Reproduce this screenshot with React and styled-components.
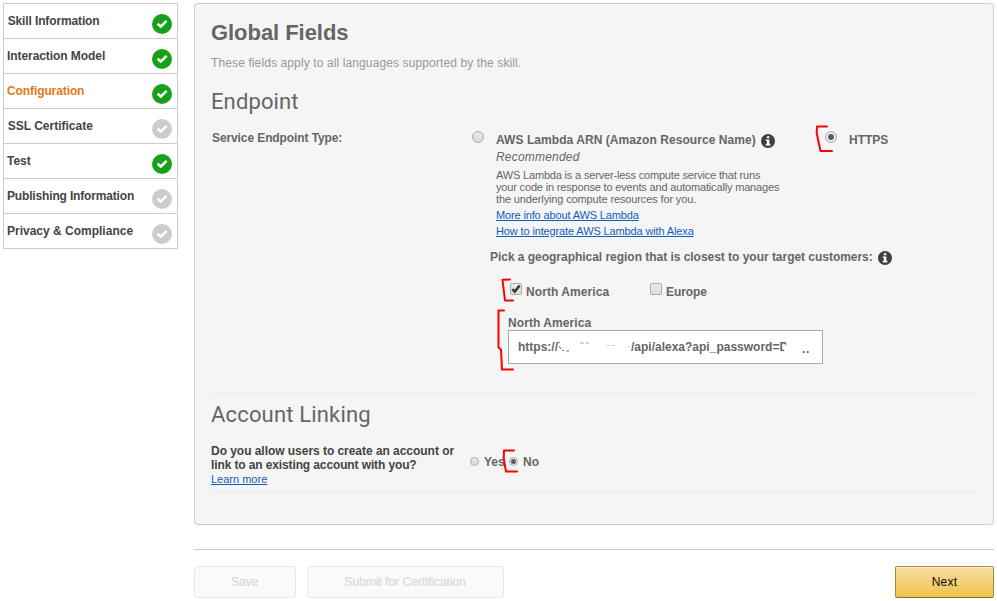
import React from 'react';
import styled, { createGlobalStyle, css } from 'styled-components';

const GlobalStyle = createGlobalStyle`
  *, *::before, *::after { box-sizing: border-box; }
  body { margin: 0; background: #fff; overflow: hidden; }
`;

const Page = styled.div`
  position: relative;
  display: flex;
  align-items: flex-start;
  gap: 16px;
  width: 997px;
  height: 601px;
  padding: 3px 3px 0;
  font: 12px/14px "Liberation Sans", Arial, sans-serif;
  color: #666;
`;

const Nav = styled.nav`
  width: 175px;
  flex: none;
  border: 1px solid #ccc;
`;

const NavItem = styled.a`
  display: flex;
  justify-content: space-between;
  height: 35px;
  padding: 10px 5px 0 3px;
  font-weight: bold;
  letter-spacing: ${(p) => p.$spacing || 0}px;
  text-indent: ${(p) => p.$indent || 0}px;
  color: ${(p) => (p.$active ? '#e47911' : '#444')};
  border-bottom: 1px solid #ccc;
  white-space: nowrap;
  &:last-child { height: 34px; border-bottom: 0; }
`;

const StatusSvg = styled.svg`
  flex: none;
  width: 20px;
  height: 20px;
`;

const Main = styled.main`
  width: 800px;
  flex: none;
`;

const Panel = styled.section`
  height: 522px;
  padding: 15px 16px 0;
  background: #f5f5f5;
  border: 1px solid #ccc;
  border-radius: 4px;
`;

const Title = styled.h1`
  margin: 0;
  font-size: 22px;
  line-height: 28px;
  font-weight: bold;
  letter-spacing: -0.05px;
  color: #666;
`;

const Intro = styled.p`
  margin: 9px 0 0;
  letter-spacing: 0.115px;
  color: #999;
`;

const Heading = styled.h2`
  margin: ${(p) => p.$top}px 0 0;
  font: 400 22px/28px Roboto, sans-serif;
  letter-spacing: ${(p) => p.$spacing}px;
  color: #666;
`;

const EndpointGrid = styled.div`
  display: grid;
  grid-template-columns: 261px 353px 1fr;
  height: 133px;
  padding-top: 15px;
`;

const Label = styled.span`
  font-weight: bold;
  letter-spacing: ${(p) => p.$spacing || 0}px;
  white-space: nowrap;
`;

const FieldLabel = styled(Label)`
  padding-left: 1px;
`;

const Choice = styled.div`
  display: flex;
  align-items: flex-start;
  gap: ${(p) => p.$gap}px;
`;

const Radio = styled.span`
  display: grid;
  place-items: center;
  flex: none;
  width: ${(p) => p.$size}px;
  height: ${(p) => p.$size}px;
  border: 1px solid #aaa;
  border-radius: 50%;
  background: linear-gradient(#e9e9e9, #dcdcdc);
  ${(p) => p.$checked && css`
    background: #eee;
    &::after {
      content: '';
      width: ${p.$size > 10 ? 6 : 5}px;
      height: ${p.$size > 10 ? 6 : 5}px;
      border-radius: 50%;
      background: #5c5c5c;
    }
  `}
`;

const Details = styled.div`
  padding-top: 2px;
`;

const LabelLine = styled.div`
  display: flex;
  gap: ${(p) => p.$gap}px;
  height: 14px;
`;

const InfoSvg = styled.svg`
  width: 14px;
  height: 14px;
  margin-top: 1px;
  flex: none;
`;

const Recommended = styled.div`
  padding: 3px 0 5px 0;
  font-style: italic;
  letter-spacing: 0.2px;
`;

const Small = styled.div`
  font-size: 11px;
  line-height: 12px;
  letter-spacing: ${(p) => p.$spacing}px;
  white-space: nowrap;
`;

const Link = styled.a`
  display: block;
  width: fit-content;
  margin-top: ${(p) => p.$top}px;
  font-size: 11px;
  line-height: 12px;
  letter-spacing: ${(p) => p.$spacing || 0}px;
  color: #0f5fbf;
  text-decoration: underline;
  white-space: nowrap;
`;

const Region = styled.div`
  padding: 1px 0 0 279px;
`;

const Checks = styled.div`
  display: flex;
  padding: 19px 0 0 20px;
`;

const CheckChoice = styled.div`
  display: flex;
  width: 140px;
  gap: 4px;
  ${Label} { padding-top: 2px; }
`;

const CheckBox = styled.span`
  display: grid;
  place-items: center;
  width: 12px;
  height: 12px;
  border: 1px solid #aaa;
  border-radius: 2px;
  background: linear-gradient(#ececec, #dcdcdc);
  svg { width: 10px; height: 10px; overflow: visible; }
`;

const UrlField = styled.div`
  padding: 17px 0 0 18px;
`;

const UrlInput = styled.div`
  display: flex;
  align-items: flex-start;
  width: 315px;
  height: 34px;
  padding: 9px 0 0 9px;
  background: #fff;
  border: 1px solid #aaa;
  font-weight: bold;
  white-space: pre;
`;

const Smudge = styled.svg`
  width: 73px;
  height: 14px;
  flex: none;
`;

const CutLetter = styled.span`
  clip-path: polygon(0 0, 80% 0, 80% 38%, 38% 38%, 38% 70%, 55% 70%, 55% 100%, 0 100%);
`;

const Dots = styled.span`
  padding: 2px 0 0 14px;
  letter-spacing: 0.6px;
`;

const Rule = styled.hr`
  height: 1px;
  margin: ${(p) => p.$top}px 1px 0 0;
  border: 0;
  background: #ebebeb;
`;

const AccountRow = styled.div`
  display: grid;
  grid-template-columns: 259px 1fr;
  height: 61px;
  padding-top: 15px;
`;

const Question = styled.div`
  display: flex;
  flex-direction: column;
  color: #444;
`;

const YesNo = styled.div`
  display: flex;
  padding-top: 11px;
  ${Radio} { margin-top: 2px; }
`;

const Answer = styled(Label)`
  width: 25px;
  padding-left: 5px;
  margin-right: ${(p) => p.$right || 0}px;
`;

const Footer = styled.footer`
  display: flex;
  gap: 11px;
  margin-top: 24px;
  padding-top: 16px;
  border-top: 1px solid #ccc;
`;

const Button = styled.button`
  width: ${(p) => p.$width}px;
  height: 32px;
  padding: 0 1px 1px 0;
  border: 1px solid #e8e8e8;
  border-radius: 3px;
  background: #fafafc;
  font: 12px "Liberation Sans", Arial, sans-serif;
  color: #dcdcdc;
  text-shadow: 0.5px 0 0 #e4e4e4;
`;

const NextButton = styled(Button)`
  margin-left: auto;
  padding-right: 0;
  border-color: #b38b32 #a88734 #8f6d1f;
  border-radius: 2px;
  background: linear-gradient(#f7dfa5, #f0c14b);
  box-shadow: inset 0 1px 0 #fbeecb;
  color: #111;
  text-shadow: none;
  letter-spacing: 0.2px;
`;

const Marks = styled.svg`
  position: absolute;
  top: 0;
  left: 0;
  pointer-events: none;
`;

const steps = [
  { name: 'Skill Information', done: true, spacing: -0.13, indent: 0.7 },
  { name: 'Interaction Model', done: true, spacing: -0.07 },
  { name: 'Configuration', done: true, active: true, spacing: -0.1 },
  { name: 'SSL Certificate', done: false, indent: 0.7 },
  { name: 'Test', done: true },
  { name: 'Publishing Information', done: false, spacing: -0.16 },
  { name: 'Privacy & Compliance', done: false },
];

const markPaths = [
  'M827 126.5 L817 126.5 L816.7 133 L820.5 151 L832 151',
  'M510 279.5 L502.5 279.8 L505 300.5 L513 300.5',
  'M504 310.5 L498.5 310.5 L498.5 347.5 L501 349.5 L502 369.5 L513 369.5',
  'M514 450.5 L504 450.5 L503.7 458 L506 471.5 L517 471.5',
];

function Status({ done }) {
  return (
    <StatusSvg viewBox="0 0 20 20">
      <circle cx="10" cy="10" r="10" fill={done ? '#17a11a' : '#ccc'} />
      <path d="M5.6 9.8 L8.8 12.6 L14.6 6.9" fill="none" stroke="#fff" strokeWidth="2.6" />
    </StatusSvg>
  );
}

function Info() {
  return (
    <InfoSvg viewBox="0 0 14 14">
      <circle cx="7" cy="7" r="7" fill="#404040" />
      <path d="M5.8 2.3h2.5v2H5.8z M4.8 5.5h3.5v4.3h1.1v1.6H4.8V9.8h1.1V7H4.8z" fill="#fff" />
    </InfoSvg>
  );
}

export default function App() {
  return (
    <Page>
      <GlobalStyle />
      <Nav>
        {steps.map((s) => (
          <NavItem key={s.name} $active={s.active} $spacing={s.spacing} $indent={s.indent}>
            {s.name}
            <Status done={s.done} />
          </NavItem>
        ))}
      </Nav>
      <Main>
        <Panel>
          <Title>Global Fields</Title>
          <Intro>These fields apply to all languages supported by the skill.</Intro>
          <Heading $top={18} $spacing={0.12}>Endpoint</Heading>
          <EndpointGrid>
            <FieldLabel $spacing={-0.1}>Service Endpoint Type:</FieldLabel>
            <Choice $gap={12}>
              <Radio $size={12} />
              <Details>
                <LabelLine $gap={5}>
                  <Label $spacing={0.06}>AWS Lambda ARN (Amazon Resource Name)</Label>
                  <Info />
                </LabelLine>
                <Recommended>Recommended</Recommended>
                <Small $spacing={-0.175}>AWS Lambda is a server-less compute service that runs</Small>
                <Small $spacing={-0.17}>your code in response to events and automatically manages</Small>
                <Small $spacing={-0.13}>the underlying compute resources for you.</Small>
                <Link $top={4} $spacing={-0.14}>More info about AWS Lambda</Link>
                <Link $top={4} $spacing={-0.13}>How to integrate AWS Lambda with Alexa</Link>
              </Details>
            </Choice>
            <Choice $gap={12}>
              <Radio $size={12} $checked />
              <Details><Label>HTTPS</Label></Details>
            </Choice>
          </EndpointGrid>
          <Region>
            <LabelLine $gap={5}>
              <Label $spacing={-0.03}>Pick a geographical region that is closest to your target customers:</Label>
              <Info />
            </LabelLine>
            <Checks>
              <CheckChoice>
                <CheckBox>
                  <svg viewBox="0 0 10 10">
                    <path d="M1.4 5.2 L3.8 7.6 L8.6 1.6" fill="none" stroke="#333" strokeWidth="2.4" />
                  </svg>
                </CheckBox>
                <Label $spacing={0.08}>North America</Label>
              </CheckChoice>
              <CheckChoice>
                <CheckBox />
                <Label $spacing={-0.1}>Europe</Label>
              </CheckChoice>
            </Checks>
            <UrlField>
              <Label as="div" $spacing={0.08}>North America</Label>
              <UrlInput>
                https://
                <Smudge viewBox="0 0 73 14" fill="none" stroke="#aaa">
                  <path d="M0 3l2-1M1 6l2 3M4 10.5h2M8 11h3" stroke="#777" />
                  <path d="M22 3h4M28 3h3" />
                  <path d="M49 5.5h3M54 5.5h3" stroke="#ccc" />
                  <path d="M70.5 6v1.5" stroke="#ccc" />
                </Smudge>
                /api/alexa?api_password=
                <CutLetter>D</CutLetter>
                <Dots>..</Dots>
              </UrlInput>
            </UrlField>
          </Region>
          <Rule $top={29} />
          <Heading $top={7} $spacing={0.17}>Account Linking</Heading>
          <AccountRow>
            <Question>
              <Label $spacing={-0.04}>Do you allow users to create an account or</Label>
              <Label $spacing={-0.12}>link to an existing account with you?</Label>
              <Link $top={1}>Learn more</Link>
            </Question>
            <YesNo>
              <Radio $size={9} />
              <Answer $right={5}>Yes</Answer>
              <Radio $size={9} $checked />
              <Answer>No</Answer>
            </YesNo>
          </AccountRow>
          <Rule $top={1} />
        </Panel>
        <Footer>
          <Button $width={102} disabled>Save</Button>
          <Button $width={197} disabled>Submit for Certification</Button>
          <NextButton $width={99}>Next</NextButton>
        </Footer>
      </Main>
      <Marks width="997" height="601" viewBox="0 0 997 601" fill="none" stroke="#f00" strokeWidth="2" strokeLinejoin="round" strokeLinecap="round">
        {markPaths.map((d) => <path key={d} d={d} />)}
      </Marks>
    </Page>
  );
}
